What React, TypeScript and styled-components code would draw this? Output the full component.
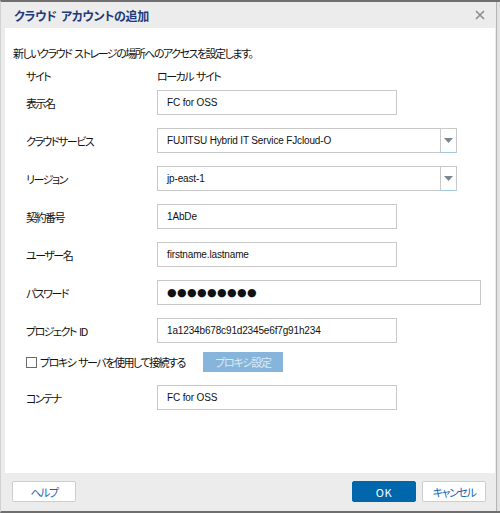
import React from 'react'
import styled, { createGlobalStyle } from 'styled-components'

const GlobalStyle = createGlobalStyle`
  html, body {
    margin: 0;
    padding: 0;
    background: #fff;
  }
  body {
    font-family: "Noto Sans CJK JP", "Noto Sans", sans-serif;
    color: #111;
  }
`

const Dialog = styled.div`
  width: 500px;
  height: 513px;
  box-sizing: border-box;
  display: flex;
  flex-direction: column;
  background: #ececec;
  border-top: 2px solid #6f6f6f;
  border-bottom: 2px solid #6f6f6f;
  border-left: 1px solid #d2d2d2;
  box-shadow: inset -3px 0 0 #e2e2e2, inset -4px 0 0 #b5b5b5;
`

const TitleBar = styled.div`
  height: 26px;
  flex: none;
  display: flex;
  align-items: center;
  justify-content: space-between;
  padding: 0 14px 0 13px;
`

const Title = styled.h1`
  margin: 0;
  font-size: 12px;
  font-weight: 700;
  letter-spacing: -0.3px;
  word-spacing: 2px;
  color: #1d3a7e;
  font-feature-settings: "palt";
`

const CloseButton = styled.button`
  width: 12px;
  height: 12px;
  padding: 0;
  border: none;
  background: none;
  display: flex;
  cursor: pointer;
`

const Body = styled.div`
  flex: 1;
  margin: 0 5px 0 4px;
  background: #fff;
  padding: 17px 0 0 8px;
  font-size: 11px;
  letter-spacing: -1.5px;
  word-spacing: 2px;
  font-feature-settings: "palt";
`

const Intro = styled.p`
  margin: 0;
  line-height: 16px;
`

const SiteRow = styled.div`
  display: grid;
  grid-template-columns: 131px auto;
  align-items: center;
  height: 16px;
  margin: 7px 0 0 13px;
`

const Form = styled.div`
  display: flex;
  flex-direction: column;
  gap: 13px;
  margin: 6px 0 0 13px;
`

const Row = styled.div`
  display: grid;
  grid-template-columns: 131px auto;
  align-items: center;
  height: 25px;
`

const Label = styled.span`
  white-space: nowrap;
`

const Input = styled.div<{ $wide?: boolean }>`
  box-sizing: border-box;
  width: ${p => (p.$wide ? 324 : 240)}px;
  height: 25px;
  border: 1px solid #c9c9c9;
  padding-left: 9px;
  display: flex;
  align-items: center;
  font-family: "Liberation Sans", Arial, sans-serif;
  font-size: 10px;
  letter-spacing: -0.15px;
  word-spacing: 0;
`

const Dots = styled.span`
  font-family: "DejaVu Sans", sans-serif;
  font-size: 11px;
  letter-spacing: 0.4px;
`

const Select = styled.div`
  box-sizing: border-box;
  width: 300px;
  height: 25px;
  border: 1px solid #c9c9c9;
  display: flex;
  align-items: stretch;
  font-family: "Liberation Sans", Arial, sans-serif;
  font-size: 10px;
  letter-spacing: -0.15px;
  word-spacing: 0;
`

const SelectValue = styled.span`
  flex: 1;
  display: flex;
  align-items: center;
  padding-left: 9px;
`

const SelectArrow = styled.span`
  width: 15px;
  border-left: 1px solid #c9c9c9;
  border-bottom: 1px solid #9ec7ec;
  margin-bottom: -1px;
  display: flex;
  align-items: center;
  justify-content: center;
`

const CheckRow = styled.div`
  display: flex;
  align-items: center;
  height: 20px;
  margin-top: -4px;
`

const CheckLabel = styled.label`
  display: flex;
  align-items: center;
  gap: 3px;
  white-space: nowrap;
`

const CheckBox = styled.span`
  width: 11px;
  height: 11px;
  box-sizing: border-box;
  border: 1px solid #6a6a6a;
  background: #fff;
`

const ProxyButton = styled.button`
  margin-left: 18px;
  width: 80px;
  height: 20px;
  border: none;
  background: #86b4da;
  color: #dde9f4;
  font-family: inherit;
  font-size: 11px;
  letter-spacing: -1.3px;
  font-feature-settings: "palt";
  padding: 0;
`

const Footer = styled.div`
  height: 38px;
  flex: none;
  display: flex;
  align-items: flex-start;
  padding: 8px 14px 0 11px;
  box-sizing: border-box;
`

const FooterButton = styled.button<{ $primary?: boolean }>`
  width: 64px;
  height: 21px;
  box-sizing: border-box;
  border: 1px solid ${p => (p.$primary ? '#0067ac' : '#cdcdcd')};
  border-radius: 2px;
  background: ${p => (p.$primary ? '#0067ac' : '#fff')};
  color: ${p => (p.$primary ? '#fff' : '#1467b3')};
  font-family: "Noto Sans CJK JP", sans-serif;
  font-size: 11px;
  letter-spacing: ${p => (p.$primary ? 0.5 : -1.4)}px;
  font-feature-settings: "palt";
  padding: 0;
`

const Spacer = styled.div`
  flex: 1;
`

const ButtonGroup = styled.div`
  display: flex;
  gap: 6px;
`

const fields: { label: string; value: string; kind?: 'select' | 'password' }[] = [
  { label: '表示名', value: 'FC for OSS' },
  { label: 'クラウドサービス', value: 'FUJITSU Hybrid IT Service FJcloud-O', kind: 'select' },
  { label: 'リージョン', value: 'jp-east-1', kind: 'select' },
  { label: '契約番号', value: '1AbDe' },
  { label: 'ユーザー名', value: 'firstname.lastname' },
  { label: 'パスワード', value: '●●●●●●●●●', kind: 'password' },
  { label: 'プロジェクト ID', value: '1a1234b678c91d2345e6f7g91h234' },
]

const Arrow = () => (
  <svg width="9" height="5" viewBox="0 0 9 5">
    <path d="M0 0 H9 L4.5 5 Z" fill="#7d8590" />
  </svg>
)

const App: React.FC = () => {
  return (
    <>
      <GlobalStyle />
      <Dialog>
        <TitleBar>
          <Title>クラウド アカウントの追加</Title>
          <CloseButton aria-label="閉じる">
            <svg width="12" height="12" viewBox="0 0 12 12">
              <path d="M2 2 L10 10 M10 2 L2 10" stroke="#8c8c8c" strokeWidth="1.6" />
            </svg>
          </CloseButton>
        </TitleBar>

        <Body>
          <Intro>新しいクラウド ストレージの場所へのアクセスを設定します。</Intro>
          <SiteRow>
            <Label>サイト</Label>
            <Label>ローカル サイト</Label>
          </SiteRow>

          <Form>
            {fields.map(field => (
              <Row key={field.label}>
                <Label>{field.label}</Label>
                {field.kind === 'select' ? (
                  <Select>
                    <SelectValue>{field.value}</SelectValue>
                    <SelectArrow>
                      <Arrow />
                    </SelectArrow>
                  </Select>
                ) : field.kind === 'password' ? (
                  <Input $wide>
                    <Dots>{field.value}</Dots>
                  </Input>
                ) : (
                  <Input>{field.value}</Input>
                )}
              </Row>
            ))}

            <CheckRow>
              <CheckLabel>
                <CheckBox />
                プロキシ サーバを使用して接続する
              </CheckLabel>
              <ProxyButton disabled>プロキシ設定</ProxyButton>
            </CheckRow>

            <Row>
              <Label>コンテナ</Label>
              <Input>FC for OSS</Input>
            </Row>
          </Form>
        </Body>

        <Footer>
          <FooterButton>ヘルプ</FooterButton>
          <Spacer />
          <ButtonGroup>
            <FooterButton $primary>OK</FooterButton>
            <FooterButton>キャンセル</FooterButton>
          </ButtonGroup>
        </Footer>
      </Dialog>
    </>
  )
}

export default App
